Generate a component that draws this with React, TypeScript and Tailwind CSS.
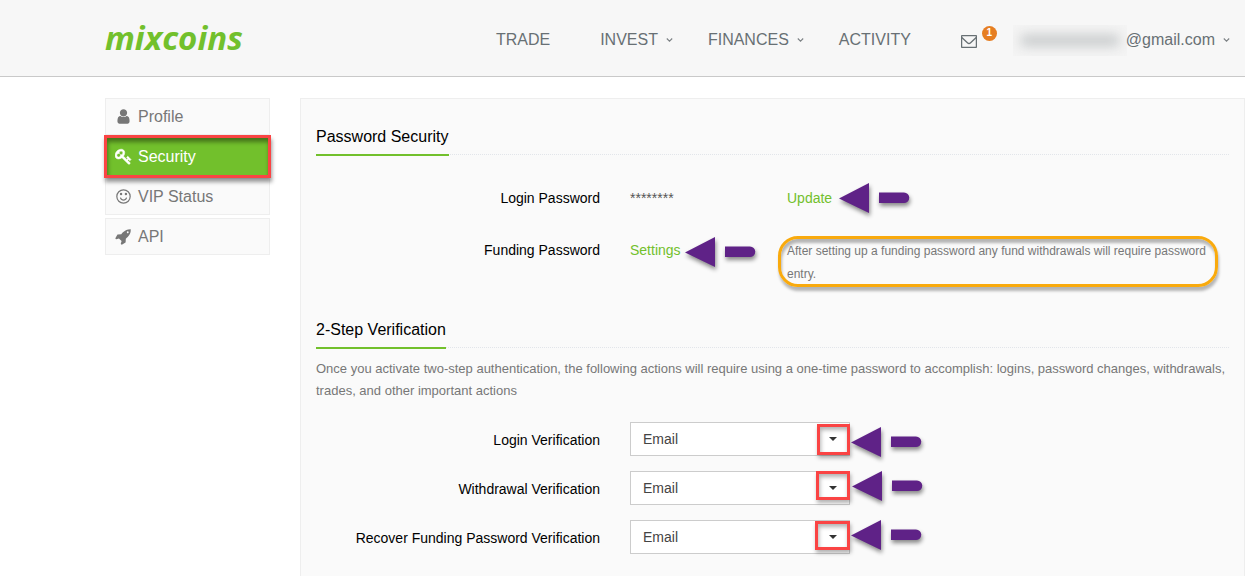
import React from 'react';
import clsx from 'clsx';

const ICONS = {
  user: 'M1536 1399q0 109-62.5 187t-150.5 78h-854q-88 0-150.5-78t-62.5-187q0-85 8.5-160.5t31.5-152 58.5-131 94-89 134.5-34.5q131 128 313 128t313-128q76 0 134.5 34.5t94 89 58.5 131 31.5 152 8.5 160.5zm-256-887q0 159-112.5 271.5t-271.5 112.5-271.5-112.5-112.5-271.5 112.5-271.5 271.5-112.5 271.5 112.5 112.5 271.5z',
  key: 'M832 512q0-80-56-136t-136-56-136 56-56 136q0 42 19 83-41-19-83-19-80 0-136 56t-56 136 56 136 136 56 136-56 56-136q0-42-19-83 41 19 83 19 80 0 136-56t56-136zm851 704q0 17-49 66t-66 49q-9 0-28.5-16t-36.5-33-38.5-40-24.5-26l-96 96 220 220q28 28 28 68 0 42-39 81t-81 39q-40 0-68-28l-671-671q-176 131-365 131-163 0-265.5-102.5t-102.5-265.5q0-160 95-313t248-248 313-95q163 0 265.5 102.5t102.5 265.5q0 189-131 365l355 355 96-96q-3-3-26-24.5t-40-38.5-33-36.5-16-28.5q0-17 49-66t66-49q13 0 23 10 6 6 46 44.5t82 79.5 86.5 86 73 78 28.5 41z',
  smile: 'M1262 1075q-37 121-138 195t-228 74-228-74-138-195q-8-25 4-48.5t38-31.5q25-8 48.5 4t31.5 38q25 80 92.5 129.5t151.5 49.5 151.5-49.5 92.5-129.5q8-26 32-38t49-4 37 31.5 4 48.5zM768 640a128 128 0 1 1-256 0 128 128 0 1 1 256 0zM1280 640a128 128 0 1 1-256 0 128 128 0 1 1 256 0zM896 128a768 768 0 1 0 0 1536 768 768 0 1 0 0-1536zM896 256a640 640 0 1 1 0 1280 640 640 0 1 1 0-1280z',
  rocket: 'M1440 448q0-40-28-68t-68-28-68 28-28 68 28 68 68 28 68-28 28-68zm224-288q0 249-75.5 430.5t-253.5 360.5q-81 80-195 176l-20 379q-2 16-16 26l-384 224q-7 4-16 4-12 0-23-9l-64-64q-13-14-8-32l85-276-281-281-276 85q-3 1-9 1-14 0-23-9l-64-64q-17-19-5-39l224-384q10-14 26-16l379-20q96-114 176-195 188-187 358-258t431-71q14 0 24 9.5t10 22.5z',
};

const MENU: { label: string; icon: keyof typeof ICONS; active?: boolean }[] = [
  { label: 'Profile', icon: 'user' },
  { label: 'Security', icon: 'key', active: true },
  { label: 'VIP Status', icon: 'smile' },
  { label: 'API', icon: 'rocket' },
];

const VERIFICATIONS = [
  { id: 'login', label: 'Login Verification', box: 'left-[187px] top-[2px] w-[33px] h-[31px]', arrow: 'left-[221px] top-[5px]' },
  { id: 'withdrawal', label: 'Withdrawal Verification', box: 'left-[186px] top-0 w-[34px] h-[29px]', arrow: 'left-[222px] top-0' },
  { id: 'recover', label: 'Recover Funding Password Verification', box: 'left-[185px] top-[1px] w-[35px] h-[29px]', arrow: 'left-[221px] top-0' },
];

const Chevron = () => (
  <svg className="ml-2 h-[4px] w-[7px]" viewBox="0 0 7 4" fill="none" stroke="#7d8285" strokeWidth="1.1" aria-hidden="true">
    <path d="M.8.5 3.500 3.200 6.200.5" />
  </svg>
);

const Arrow = ({ className }: { className: string }) => (
  <svg
    className={clsx('pointer-events-none absolute h-[31px] w-[71px] overflow-visible drop-shadow-[1px_3px_2px_rgba(0,0,0,0.45)]', className)}
    viewBox="0 0 71 31"
    fill="#5f2287"
    aria-hidden="true"
  >
    <path d="M0 15.5 30 0V30Z" />
    <path d="M40 9.5h25a5 5 0 0 1 0 10.500H40Z" />
  </svg>
);

const Heading = ({ children }: { children: React.ReactNode }) => (
  <div className="relative flex">
    <div className="absolute inset-x-0 bottom-[1px] border-b border-dotted border-[#e2e5ea]" />
    <h2 className="relative border-b-2 border-[#72c02c] pb-[7px] text-base leading-5 text-black">{children}</h2>
  </div>
);

export default function App() {
  return (
    <div className="min-h-screen bg-white font-['Liberation_Sans',Arial,sans-serif] text-[#777]">
      <header className="flex h-[77px] items-center justify-between border-b border-[#c9c9c9] bg-[#f7f7f7] pr-[15px] pl-[105px]">
        <a href="#" className="font-['Open_Sans',sans-serif] text-[33px] leading-10 font-bold text-[#72c02c] italic">
          mixcoins
        </a>
        <nav className="flex items-center pt-1 text-base text-[#687074]">
          <a href="#" className="mr-[50px]">TRADE</a>
          <a href="#" className="mr-[35px] flex items-center">INVEST<Chevron /></a>
          <a href="#" className="mr-[35px] flex items-center">FINANCES<Chevron /></a>
          <a href="#" className="mr-[50px]">ACTIVITY</a>
          <a href="#" aria-label="Messages" className="relative mr-9 pt-[2px]">
            <svg className="h-[13px] w-[16px]" viewBox="0 0 16 13" fill="none" stroke="#687074" aria-hidden="true">
              <rect x=".6" y=".6" width="14.800" height="11.800" rx=".6" strokeWidth="1.300" />
              <path d="M.8 2.600 6.400 7.800c1 .9 2.200.9 3.200 0L15.200 2.600" strokeWidth="1.300" />
            </svg>
            <span className="absolute -top-[7px] left-[21px] flex h-[15px] w-[15px] items-center justify-center rounded-full bg-[#e67e22] text-[10px] leading-none font-bold text-white">
              1
            </span>
          </a>
          <a href="#" className="flex items-center">
            <span className="mr-[-1px] flex h-[31px] w-[114px] items-center overflow-hidden bg-[#f4f4f4]" aria-hidden="true">
              <span className="mx-2 h-[11px] w-full bg-[#c6c9ca] blur-[6px]" />
            </span>
            @gmail.com
            <Chevron />
          </a>
        </nav>
      </header>

      <div className="flex gap-[30px] pt-[21px] pl-[105px]">
        <aside className="w-[165px] shrink-0">
          <ul className="flex flex-col gap-[3px]">
            {MENU.map((item) => (
              <li key={item.label} className={clsx('relative', item.active && 'z-10')}>
                <a
                  href="#"
                  className={clsx(
                    'flex h-[37px] items-center gap-[6px] border pl-[9px] text-base',
                    item.active ? 'border-[#72c02c] bg-[#72c02c] text-white' : 'border-[#eee] bg-[#fafafa]',
                  )}
                >
                  <svg
                    className={clsx('h-[17px] w-[17px]', item.active && 'stroke-white stroke-[60]')}
                    viewBox="0 0 1792 1792"
                    fill="currentColor"
                    fillRule="evenodd"
                    aria-hidden="true"
                  >
                    <path d={ICONS[item.icon]} />
                  </svg>
                  {item.label}
                </a>
                {item.active && (
                  <div className="pointer-events-none absolute -inset-x-[1px] -inset-y-[3px] border-3 border-[#fa4444] shadow-[1px_4px_4px_rgba(0,0,0,0.4),inset_1px_4px_4px_rgba(0,0,0,0.4)]" />
                )}
              </li>
            ))}
          </ul>
        </aside>

        <main className="min-w-0 flex-1 border border-[#eee] bg-[#fafafa] px-[15px] pt-7 pb-6">
          <Heading>Password Security</Heading>

          <div className="mt-8 flex gap-[30px] text-sm leading-5">
            <div className="w-[284px] shrink-0 text-right text-black">Login Password</div>
            <div className="w-[127px] shrink-0 text-[#555]">********</div>
            <div className="relative">
              <a href="#" className="text-[#72c02c]">Update</a>
              <Arrow className="top-[-5px] left-[52px]" />
            </div>
          </div>

          <div className="mt-8 flex gap-[30px] text-sm leading-5">
            <div className="w-[284px] shrink-0 text-right text-black">Funding Password</div>
            <div className="relative w-[127px] shrink-0">
              <a href="#" className="text-[#72c02c]">Settings</a>
              <Arrow className="top-[-3px] left-[55px]" />
            </div>
            <div className="relative mr-5 flex-1">
              <p className="text-xs leading-[23px]">
                After setting up a funding password any fund withdrawals will require password entry.
              </p>
              <div className="pointer-events-none absolute -inset-x-[9px] -top-[4px] h-[51px] rounded-[20px] border-3 border-[#f9aa0d] shadow-[1px_4px_3px_rgba(0,0,0,0.28),inset_1px_4px_3px_rgba(0,0,0,0.28)]" />
            </div>
          </div>

          <div className="mt-[34px]">
            <Heading>2-Step Verification</Heading>
          </div>
          <p className="mt-[9px] text-[13px] leading-[22px]">
            Once you activate two-step authentication, the following actions will require using a one-time password to
            accomplish: logins, password changes, withdrawals, trades, and other important actions
          </p>

          <form className="mt-5 flex flex-col gap-[15px]">
            {VERIFICATIONS.map((v) => (
              <div key={v.id} className="flex items-center gap-[30px] text-sm">
                <label htmlFor={v.id} className="w-[284px] shrink-0 pt-[2px] text-right text-black">{v.label}</label>
                <div className="relative">
                  <select
                    id={v.id}
                    defaultValue="Email"
                    className="block h-[34px] w-[220px] appearance-none border border-[#ccc] bg-white px-3 text-sm text-[#444]"
                  >
                    <option>Email</option>
                  </select>
                  <svg className="pointer-events-none absolute top-[15px] left-[199px] h-1 w-2" viewBox="0 0 8 4" fill="#333" aria-hidden="true">
                    <path d="M0 0h8L4 4Z" />
                  </svg>
                  <div
                    className={clsx(
                      'pointer-events-none absolute border-3 border-[#fa4444] shadow-[1px_3px_4px_rgba(0,0,0,0.3),inset_1px_3px_4px_rgba(0,0,0,0.3)]',
                      v.box,
                    )}
                  />
                  <Arrow className={v.arrow} />
                </div>
              </div>
            ))}
          </form>
        </main>
      </div>
    </div>
  );
}
